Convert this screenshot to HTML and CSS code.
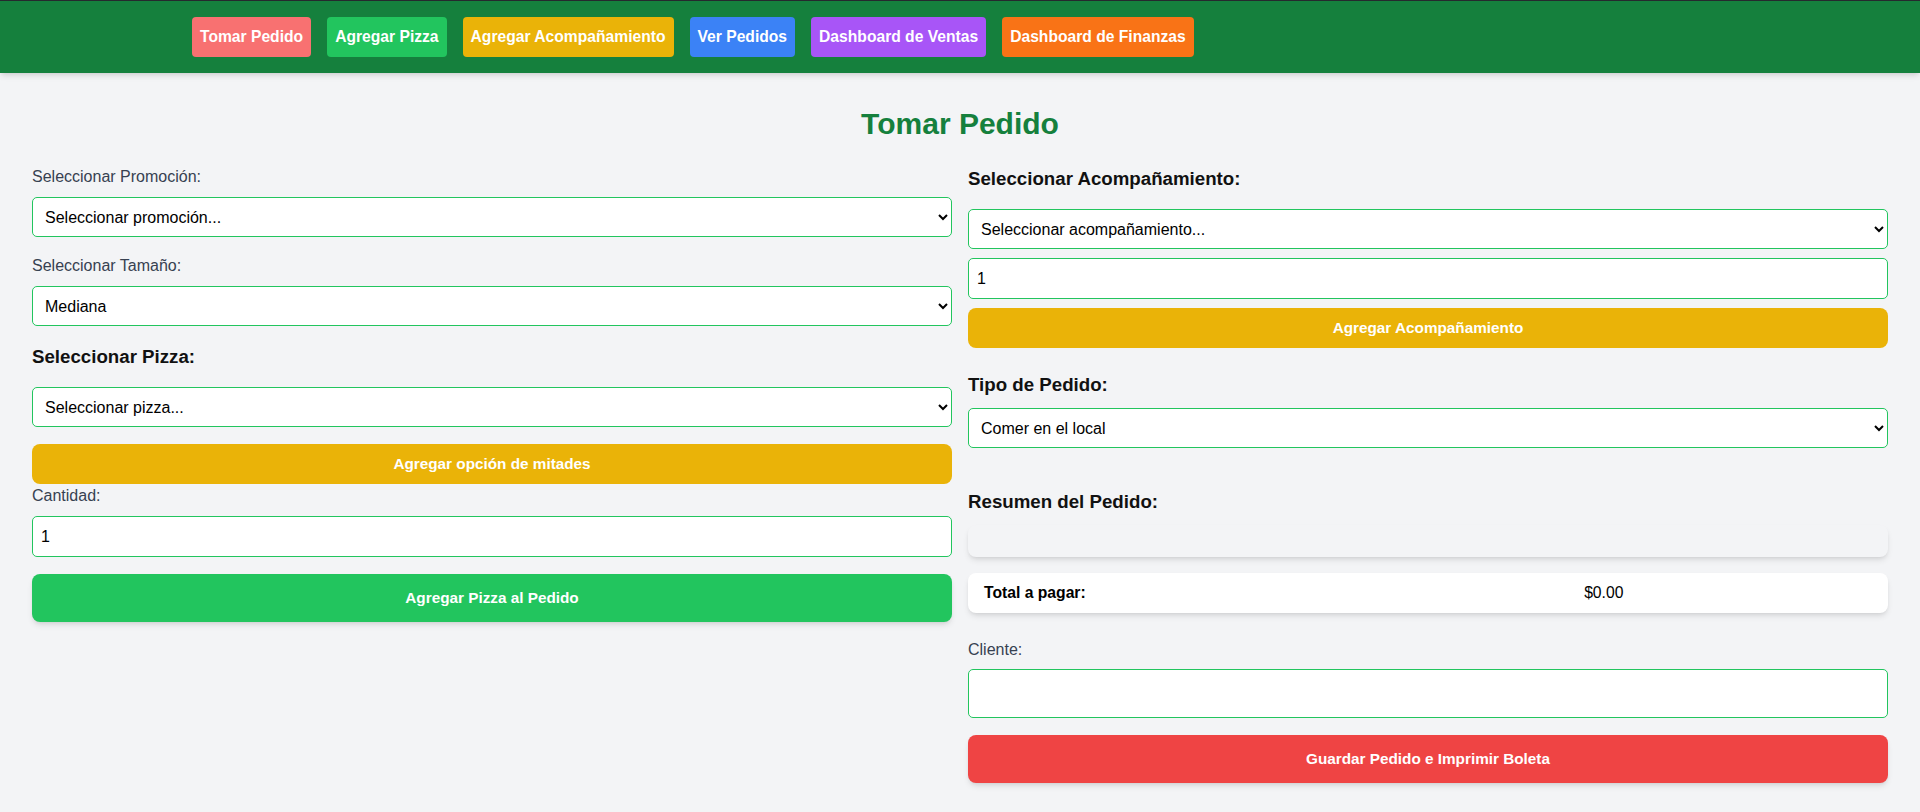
FILE: index.html
```html
<!DOCTYPE html>
<html lang="es">
<head>
<meta charset="utf-8">
<title>Tomar Pedido</title>
<link rel="stylesheet" href="styles.css">
</head>
<body>
<header class="topbar">
  <nav class="nav">
    <a class="nav-btn nav-red">Tomar Pedido</a>
    <a class="nav-btn nav-green">Agregar Pizza</a>
    <a class="nav-btn nav-yellow">Agregar Acompañamiento</a>
    <a class="nav-btn nav-blue">Ver Pedidos</a>
    <a class="nav-btn nav-purple">Dashboard de Ventas</a>
    <a class="nav-btn nav-orange">Dashboard de Finanzas</a>
  </nav>
</header>
<main class="page">
  <h1 class="title">Tomar Pedido</h1>
  <div class="columns">
    <section class="col">
      <div class="field">
        <label class="label">Seleccionar Promoción:</label>
        <select class="control"><option>Seleccionar promoción...</option></select>
      </div>
      <div class="field">
        <label class="label">Seleccionar Tamaño:</label>
        <select class="control"><option>Mediana</option></select>
      </div>
      <h2 class="heading heading-pizza">Seleccionar Pizza:</h2>
      <select class="control"><option>Seleccionar pizza...</option></select>
      <button class="btn btn-yellow gap-lg">Agregar opción de mitades</button>
      <label class="label">Cantidad:</label>
      <input class="control input" type="text" value="1">
      <button class="btn btn-green btn-lg gap-lg">Agregar Pizza al Pedido</button>
    </section>
    <section class="col">
      <h2 class="heading heading-side">Seleccionar Acompañamiento:</h2>
      <select class="control"><option>Seleccionar acompañamiento...</option></select>
      <input class="control input gap-sm" type="text" value="1">
      <button class="btn btn-yellow gap-sm">Agregar Acompañamiento</button>
      <h2 class="heading heading-tipo">Tipo de Pedido:</h2>
      <select class="control"><option>Comer en el local</option></select>
      <h2 class="heading heading-resumen">Resumen del Pedido:</h2>
      <div class="summary"></div>
      <div class="total-box">
        <table class="total-table">
          <tr>
            <td class="total-label">Total a pagar:</td>
            <td class="total-value">$0.00</td>
          </tr>
        </table>
      </div>
      <label class="label label-cliente">Cliente:</label>
      <input class="control input input-lg" type="text" value="">
      <button class="btn btn-red btn-lg gap-lg">Guardar Pedido e Imprimir Boleta</button>
    </section>
  </div>
</main>
</body>
</html>
```

FILE: styles.css
```css
* {
  box-sizing: border-box;
}

html, body {
  margin: 0;
  padding: 0;
}

body {
  background: #f3f4f6;
  font-family: "Liberation Sans", Arial, sans-serif;
  font-size: 16px;
  line-height: 24px;
  color: #000;
}

.topbar {
  background: #15803d;
  border-top: 1px solid #25292e;
  padding: 16px 0;
  box-shadow: 0 4px 6px -1px rgba(0, 0, 0, 0.1), 0 2px 4px -2px rgba(0, 0, 0, 0.1);
  position: relative;
  z-index: 1;
}

.nav {
  max-width: 1536px;
  margin: 0 auto;
  display: flex;
  gap: 16px;
}

.nav-btn {
  display: block;
  height: 40px;
  padding: 8px 8px;
  border-radius: 4px;
  color: #fff;
  font-weight: 700;
  font-size: 15.65px;
  line-height: 24px;
  white-space: nowrap;
}

.nav-red { background: #f87171; }
.nav-green { background: #22c55e; }
.nav-yellow { background: #eab308; }
.nav-blue { background: #3b82f6; }
.nav-purple { background: #a855f7; }
.nav-orange { background: #f97316; }

.page {
  padding: 31px 32px 24px;
}

.title {
  margin: 0 0 21px;
  text-align: center;
  color: #15803d;
  font-size: 30px;
  line-height: 40px;
  font-weight: 700;
}

.columns {
  display: grid;
  grid-template-columns: 1fr 1fr;
  gap: 16px;
  align-items: start;
}

.col {
  display: flex;
  flex-direction: column;
}

.field {
  display: flex;
  flex-direction: column;
  margin-bottom: 17px;
}

.label {
  display: block;
  color: #374151;
  font-size: 16px;
  line-height: 24px;
  margin-bottom: 8px;
}

.label-cliente {
  margin-top: 25px;
  margin-bottom: 7px;
}

.heading {
  margin: 0;
  font-size: 18.7px;
  line-height: 28px;
  font-weight: 700;
  color: #111;
}

.heading-pizza { margin-bottom: 16px; }
.heading-side { margin-bottom: 16px; }
.heading-tipo { margin-top: 23px; margin-bottom: 9px; }
.heading-resumen { margin-top: 40px; margin-bottom: 9px; }

.control {
  display: block;
  width: 100%;
  height: 40px;
  margin: 0;
  padding: 0 8px;
  background-color: #fff;
  border: 1px solid #22c55e;
  border-radius: 5px;
  font-family: "Liberation Sans", Arial, sans-serif;
  font-size: 16px;
  color: #000;
}

.input {
  height: 41px;
  padding: 8px;
  line-height: 24px;
  outline: none;
}

.input-lg {
  height: 49px;
  padding: 12px;
}

.btn {
  display: block;
  width: 100%;
  height: 40px;
  margin: 0;
  padding: 8px 16px;
  border: 0;
  border-radius: 8px;
  color: #fff;
  font-family: "Liberation Sans", Arial, sans-serif;
  font-size: 15.3px;
  font-weight: 700;
  line-height: 24px;
  text-align: center;
}

.btn-lg {
  height: 48px;
  padding: 12px 16px;
  box-shadow: 0 4px 6px -1px rgba(0, 0, 0, 0.1), 0 2px 4px -2px rgba(0, 0, 0, 0.1);
}

.btn-yellow { background: #eab308; }
.btn-green { background: #22c55e; }
.btn-red { background: #ef4444; }

.gap-sm { margin-top: 9px; }
.gap-lg { margin-top: 17px; }

.summary {
  height: 32px;
  background: #f3f4f6;
  border-radius: 8px;
  box-shadow: 0 4px 6px -1px rgba(0, 0, 0, 0.1), 0 2px 4px -2px rgba(0, 0, 0, 0.1);
}

.total-box {
  margin-top: 16px;
  background: #fff;
  border-radius: 8px;
  box-shadow: 0 4px 6px -1px rgba(0, 0, 0, 0.1), 0 2px 4px -2px rgba(0, 0, 0, 0.1);
  overflow: hidden;
}

.total-table {
  width: 100%;
  border-collapse: collapse;
}

.total-table td {
  padding: 8px 16px;
  font-size: 15.7px;
  line-height: 24px;
  color: #000;
}

.total-label {
  font-weight: 700;
}
```
